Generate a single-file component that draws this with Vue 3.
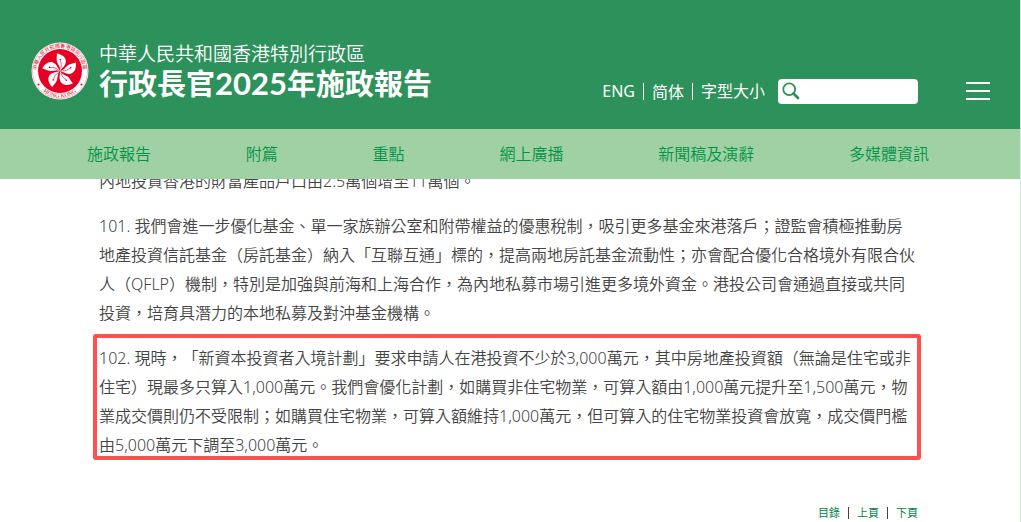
<template>
  <div class="page">
    <header class="site-header">
      <a href="#" class="brand">
        <svg class="emblem" viewBox="0 0 58 58" aria-hidden="true">
          <circle cx="29" cy="29" r="28.5" fill="#fff" />
          <circle cx="29" cy="29" r="27.6" fill="none" stroke="#ee7f90" stroke-width="0.5" />
          <circle cx="29" cy="29" r="22" fill="#e60026" />
          <defs>
            <path id="ring-top" d="M7.9 38.4A23.1 23.1 0 1 1 50.1 38.4" />
            <path id="ring-bottom" d="M8.5 46.2A26.8 26.8 0 0 0 49.5 46.2" />
          </defs>
          <text class="ring-text"><textPath href="#ring-top" startOffset="50%" text-anchor="middle">中華人民共和國香港特別行政區</textPath></text>
          <text class="ring-latin"><textPath href="#ring-bottom" startOffset="50%" text-anchor="middle">HONG KONG</textPath></text>
          <circle cx="7.5" cy="42.5" r="1" fill="#e60026" />
          <circle cx="50.5" cy="42.5" r="1" fill="#e60026" />
          <g v-for="n in 5" :key="n" :transform="`rotate(${n * 72 + 5} 29 29)`">
            <path d="M29 29C29.6 25 25.8 22.5 24.9 19C24.2 16 24.9 14 24.3 11.8C29 12 34 14.6 34 19.2C34 23.5 30.8 25.5 29 29Z" fill="#fff" />
            <path d="M29.3 26.5C30.5 23.5 29.5 21 28.3 18.6" fill="none" stroke="#e60026" stroke-width="0.6" />
            <circle cx="28.3" cy="17.8" r="0.8" fill="#e60026" />
          </g>
        </svg>
        <span class="brand-text">
          <span class="region">中華人民共和國香港特別行政區</span>
          <span class="title">行政長官<span class="year">2025</span>年施政報告</span>
        </span>
      </a>
      <div class="tools">
        <ul class="tool-links">
          <li><a href="#">ENG</a></li>
          <li><a href="#" class="sc">简体</a></li>
          <li><a href="#">字型大小</a></li>
        </ul>
        <form class="search" @submit.prevent>
          <button type="submit" class="search-btn" aria-label="搜尋">
            <svg viewBox="0 0 18 18" width="18" height="18">
              <circle cx="7.2" cy="7.2" r="5.9" fill="none" stroke="#2d915b" stroke-width="1.8" />
              <path d="M11.5 11.5L16 16" stroke="#2d915b" stroke-width="2.8" stroke-linecap="round" />
            </svg>
          </button>
          <input v-model="keyword" type="text" aria-label="搜尋" />
        </form>
        <button type="button" class="menu-btn" aria-label="選單">
          <span></span>
          <span></span>
          <span></span>
        </button>
      </div>
    </header>

    <nav class="main-nav">
      <a v-for="item in navItems" :key="item" href="#">{{ item }}</a>
    </nav>

    <main class="content">
      <p>內地投資香港的財富產品戶口由2.5萬個增至11萬個。</p>
      <p>
        101. 我們會進一步優化基金、單一家族辦公室和附帶權益的優惠稅制，吸引更多基金來港落戶；證監會積極推動房<br />地產投資信託基金（房託基金）納入「互聯互通」標的，提高兩地房託基金流動性；亦會配合優化合格境外有限合伙<br />人（QFLP）機制，特別是加強與前海和上海合作，為內地私募市場引進更多境外資金。港投公司會通過直接或共同<br />投資，培育具潛力的本地私募及對沖基金機構。
      </p>
      <p class="marked">
        102. 現時，「新資本投資者入境計劃」要求申請人在港投資不少於3,000萬元，其中房地產投資額（無論是住宅或非<br />住宅）現最多只算入1,000萬元。我們會優化計劃，如購買非住宅物業，可算入額由1,000萬元提升至1,500萬元，物<br />業成交價則仍不受限制；如購買住宅物業，可算入額維持1,000萬元，但可算入的住宅物業投資會放寬，成交價門檻<br />由5,000萬元下調至3,000萬元。
      </p>
      <ul class="pager">
        <li v-for="link in pagerLinks" :key="link"><a href="#">{{ link }}</a></li>
      </ul>
    </main>
  </div>
</template>

<script setup>
import { ref } from 'vue';

const keyword = ref('');

const navItems = ['施政報告', '附篇', '重點', '網上廣播', '新聞稿及演辭', '多媒體資訊'];
const pagerLinks = ['目錄', '上頁', '下頁'];
</script>

<style>
body {
  background: #fff;
  overflow: hidden;
}
</style>

<style scoped>
.page {
  font-family: "Noto Sans", "Noto Sans CJK TC", sans-serif;
  font-size: 16px;
  font-weight: 350;
  color: #444;
  border-right: 1px solid #d5e9de;
  min-height: 100vh;
  box-sizing: border-box;
  text-spacing-trim: space-all;
}
a {
  color: inherit;
  text-decoration: none;
}
ul {
  list-style: none;
  margin: 0;
  padding: 0;
}
.site-header {
  display: flex;
  justify-content: space-between;
  height: 129px;
  padding: 0 30px 0 31px;
  background: #2d915b;
  color: #fff;
  box-sizing: border-box;
}
.brand {
  display: flex;
  gap: 10px;
  padding-top: 42px;
}
.emblem {
  width: 58px;
  height: 58px;
}
.brand-text {
  display: flex;
  flex-direction: column;
  white-space: nowrap;
}
.ring-text {
  font-size: 5px;
  font-weight: 400;
  fill: #e60026;
}
.ring-latin {
  font-family: "Liberation Serif", serif;
  font-size: 6px;
  font-weight: 400;
  fill: #e60026;
}
.region {
  font-size: 19px;
  line-height: 24px;
}
.title {
  font-family: Lato, "Noto Sans CJK TC", sans-serif;
  font-size: 29px;
  font-weight: 700;
  line-height: 34px;
}
.year {
  font-size: 31px;
}
.tools {
  display: flex;
  align-items: center;
  height: 26px;
  margin-top: 78px;
}
.tool-links {
  display: flex;
  font-weight: 400;
  line-height: 16px;
}
.tool-links li + li {
  border-left: 1px solid #fff;
  margin-left: 8px;
  padding-left: 8px;
}
.sc {
  font-family: "Noto Sans CJK SC", sans-serif;
}
.search {
  display: flex;
  align-items: center;
  width: 140px;
  height: 25px;
  margin-left: 13px;
  background: #fff;
  border-radius: 4px;
}
.search-btn {
  display: flex;
  padding: 0 4px;
  border: none;
  background: none;
  cursor: pointer;
}
.search input {
  flex: 1;
  min-width: 0;
  border: none;
  outline: none;
  background: none;
}
.menu-btn {
  display: flex;
  flex-direction: column;
  gap: 6px;
  width: 24px;
  margin-left: 48px;
  padding: 0;
  border: none;
  background: none;
  cursor: pointer;
}
.menu-btn span {
  height: 2px;
  background: #fff;
}
.main-nav {
  position: relative;
  z-index: 1;
  display: flex;
  justify-content: space-between;
  align-items: center;
  height: 50px;
  padding: 0 91px 2px 87px;
  background: #9fd1a4;
  color: #009447;
  box-sizing: border-box;
}
.content {
  margin-top: -12px;
  padding: 0 102px 0 99px;
}
.content p {
  margin: 0 0 16px;
  line-height: 29px;
  white-space: nowrap;
}
.marked {
  position: relative;
}
.marked::after {
  content: "";
  position: absolute;
  inset: -10px -3px 0 -6px;
  border: 4px solid #ff5050;
  border-radius: 3px;
}
.pager {
  display: flex;
  justify-content: flex-end;
  padding-top: 31px;
  font-size: 11px;
  font-weight: 400;
  line-height: 12px;
  color: #008542;
}
.pager li + li {
  border-left: 1px solid #444;
  margin-left: 8px;
  padding-left: 8px;
}
</style>
